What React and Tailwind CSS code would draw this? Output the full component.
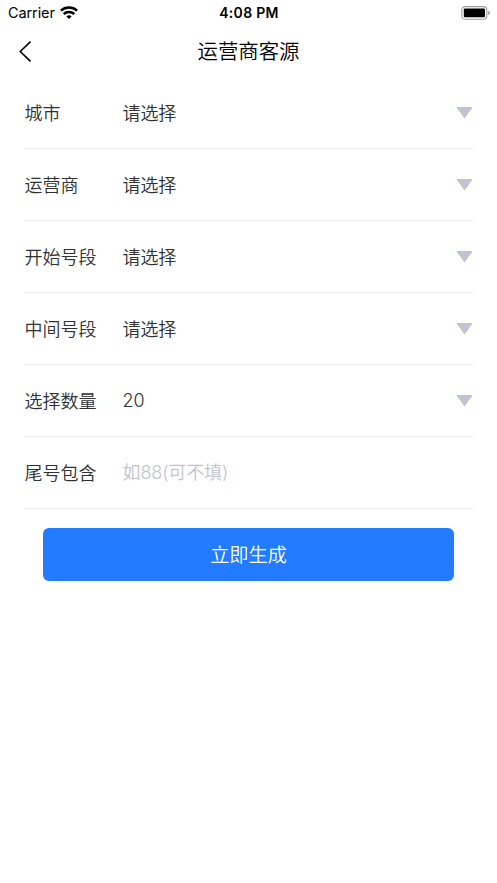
import React from 'react';

const FIELDS = [
  { label: '城市', value: '请选择' },
  { label: '运营商', value: '请选择' },
  { label: '开始号段', value: '请选择' },
  { label: '中间号段', value: '请选择' },
  { label: '选择数量', value: '20', numeric: true },
];

function WifiIcon() {
  return (
    <svg width="18" height="13" viewBox="0 0 18 13" fill="none" stroke="#000" strokeWidth="2.6">
      <path d="M0.9 4.6C5.4 0.5 12.6 0.5 17.1 4.6" />
      <path d="M3.7 7.9C6.7 5.3 11.3 5.3 14.3 7.9" />
      <path d="M9 12.9L6.4 10.4C7.8 9 10.2 9 11.6 10.4Z" fill="#000" stroke="none" />
    </svg>
  );
}

function BatteryIcon() {
  return (
    <svg width="29" height="14" viewBox="0 0 29 14">
      <rect x="0.8" y="0.6" width="25" height="12.6" rx="3.4" fill="none" stroke="#9b9b9b" strokeWidth="1.1" />
      <rect x="2.8" y="2.6" width="21.2" height="8.6" rx="1.2" fill="#000" />
      <path d="M27.3 4.7C29.2 5.3 29.2 8.5 27.3 9.1Z" fill="#8b8b8b" />
    </svg>
  );
}

function StatusBar() {
  return (
    <div className="grid h-[26px] grid-cols-3 items-center pl-[8px] pr-[7px] text-black">
      <div className="flex items-center gap-[5px]">
        <span className="text-[14.5px] leading-none tracking-[-0.1px]">Carrier</span>
        <div className="-mt-[2px]">
          <WifiIcon />
        </div>
      </div>
      <span className="text-center text-[14px] font-semibold leading-none tracking-[0.3px]">4:08 PM</span>
      <div className="-mt-px flex justify-end">
        <BatteryIcon />
      </div>
    </div>
  );
}

function Header() {
  return (
    <div className="grid h-[51px] grid-cols-[60px_1fr_60px] items-center">
      <button className="pl-[19px]">
        <svg width="13" height="21" viewBox="0 0 13 21" fill="none" stroke="#000" strokeWidth="1.6">
          <path d="M11.5 0.7L1.3 10.5L11.5 20.3" />
        </svg>
      </button>
      <h1 className="pt-px text-center text-[20.4px] font-[350] leading-none text-black">运营商客源</h1>
    </div>
  );
}

export default function App() {
  return (
    <div className="min-h-screen bg-white font-['Inter','Noto_Sans_CJK_SC',sans-serif]">
      <StatusBar />
      <Header />

      <div className="px-[24px] text-[18px] font-[350] text-[#303133]">
        {FIELDS.map(({ label, value, numeric }) => (
          <div key={label} className="flex h-[72px] items-center border-b border-[#eff0f4]">
            <span className="w-[98.5px] pl-[0.5px] pt-px">{label}</span>
            <span className={numeric ? 'flex-1 tracking-[-0.1px]' : 'flex-1 pt-px tracking-[-0.1px]'}>{value}</span>
            <svg width="17" height="12" viewBox="0 0 17 12">
              <path d="M1.3 0H15.7Q16.8 0.1 16.1 1L9.2 10.5Q8.5 11.3 7.8 10.5L0.9 1Q0.2 0.1 1.3 0Z" fill="#c0c4cc" />
            </svg>
          </div>
        ))}
        <div className="flex h-[72px] items-center border-b border-[#eff0f4]">
          <span className="w-[98.5px] pl-[0.5px] pt-px">尾号包含</span>
          <input
            className="min-w-0 flex-1 tracking-[-0.1px] outline-none placeholder:text-[#c0c4cc]"
            placeholder="如88(可不填)"
          />
        </div>
      </div>

      <div className="px-[43px] pt-[19px]">
        <button className="h-[53px] w-full rounded-[6px] bg-[#237bff] pt-px text-[19.2px] font-[350] text-white">
          立即生成
        </button>
      </div>
    </div>
  );
}
